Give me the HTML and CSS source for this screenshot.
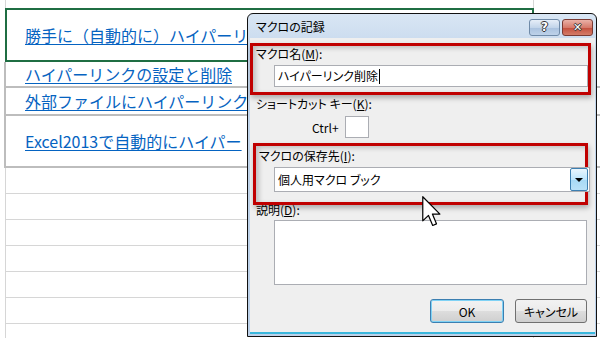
FILE: index.html
```html
<!DOCTYPE html>
<html lang="ja">
<head>
    <meta charset="UTF-8">
    <title>マクロの記録</title>
    <link rel="stylesheet" href="styles.css">
</head>
<body>
    <div class="sheet">
        <div class="row top"></div>
        <div class="row sel"><a class="link">勝手に（自動的に）ハイパーリ</a></div>
        <div class="row boxed r2"><a class="link">ハイパーリンクの設定と削除</a></div>
        <div class="row boxed r3"><a class="link">外部ファイルにハイパーリンク</a></div>
        <div class="row boxed r4"><a class="link">Excel2013で自動的にハイパー</a></div>
        <div class="row"></div>
        <div class="row"></div>
        <div class="row"></div>
        <div class="row"></div>
        <div class="row"></div>
        <div class="row"></div>
        <div class="row"></div>
    </div>

    <div class="dialog">
        <div class="titlebar">
            <span class="title">マクロの記録</span>
            <span class="tbtn help">?</span>
            <span class="tbtn close">✕</span>
        </div>
        <div class="client">
            <div class="mark mark1">
                <div class="lbl">マクロ名(<u>M</u>):</div>
                <div class="input">ハイパーリンク削除<span class="caret"></span></div>
            </div>
            <div class="lbl plain">ショートカット キー(<u>K</u>):</div>
            <div class="ctrl-row">
                <span>Ctrl+</span>
                <span class="keybox"></span>
            </div>
            <div class="mark mark2">
                <div class="lbl">マクロの保存先(<u>I</u>):</div>
                <div class="select">
                    <span>個人用マクロ ブック</span>
                    <span class="drop"></span>
                </div>
            </div>
            <div class="lbl plain desc">説明(<u>D</u>):</div>
            <div class="textarea"></div>
            <div class="buttons">
                <span class="btn ok">OK</span>
                <span class="btn">キャンセル</span>
            </div>
        </div>
    </div>

    <svg class="cursor" width="19" height="31" viewBox="0 0 12.6 20.6">
        <path d="M0.5 0.5 L0.5 16.5 L4.3 12.9 L7.1 19.6 L9.6 18.5 L6.9 12 L11.9 12 Z" fill="#fff" stroke="#000" stroke-width="0.8" stroke-linejoin="round"/>
    </svg>
</body>
</html>
```

FILE: styles.css
```css
body {
    margin: 0;
    width: 600px;
    height: 338px;
    overflow: hidden;
    background: #fff;
    font-family: "Noto Sans CJK JP", sans-serif;
    position: relative;
}
.sheet {
    margin-left: 5px;
    border-left: 1px solid #d6d6d6;
    background: linear-gradient(to right, transparent 527px, #d6d6d6 527px, #d6d6d6 528px, transparent 528px);
}
.row {
    height: 25px;
    border-bottom: 1px solid #d6d6d6;
    display: flex;
    align-items: center;
    padding-left: 18px;
    white-space: nowrap;
    overflow: hidden;
}
.row.top {
    height: 8px;
    border-bottom: none;
}
.row.sel {
    height: 50px;
    margin-left: -1px;
    width: 507px;
    border: 2px solid #1f6e43;
}
.row.boxed {
    margin-left: -2px;
    padding-left: 19px;
    border-left: 2px solid #bdbdbd;
    border-bottom: 2px solid #bdbdbd;
}
.row.r2 { height: 24px; }
.row.r3 { height: 26px; }
.row.r4 { height: 50px; }
.link {
    display: inline-block;
    max-width: 223px;
    overflow: hidden;
    color: #0563c1;
    text-decoration: underline;
    text-underline-offset: 2px;
    font-size: 16px;
    line-height: 22px;
}

.dialog {
    position: absolute;
    left: 247px;
    top: 13px;
    width: 348px;
    height: 322px;
    border: 1px solid #111;
    border-radius: 6px 6px 0 0;
    background: linear-gradient(#d9e6f4, #c4d7ec 40px, #bcd1e9);
    display: flex;
    flex-direction: column;
}
.titlebar {
    height: 24px;
    display: flex;
    align-items: center;
    padding: 0 3px 0 8px;
}
.title {
    flex: 1;
    font-size: 12px;
    color: #000;
    font-feature-settings: "palt";
}
.tbtn {
    width: 29px;
    height: 15px;
    border-radius: 3px;
    display: flex;
    align-items: center;
    justify-content: center;
    color: #fff;
    font-weight: bold;
    font-family: "DejaVu Sans", sans-serif;
    font-size: 12px;
    line-height: 1;
    text-shadow: -1px 0 #333, 1px 0 #333, 0 -1px #333, 0 1px #333;
}
.help {
    margin-right: 2px;
    margin-top: 2px;
    border: 1px solid #6f8aa8;
    background: linear-gradient(#e6eef8, #c3d5ea 50%, #a9c1de 51%, #bed2e9);
}
.close {
    margin-top: 2px;
    border: 1px solid #7a3a33;
    background: linear-gradient(#eab1a7, #d67a6b 50%, #c34d3c 51%, #d47c67);
    font-size: 11px;
}
.client {
    flex: 1;
    margin: 0 1px 2px 2px;
    background: #efefef;
    border-bottom: 2px solid #3ab7dc;
    padding-top: 5px;
    font-size: 12px;
    color: #000;
    font-feature-settings: "palt";
}
.lbl {
    height: 16px;
    line-height: 16px;
    padding-left: 3px;
}
.lbl u {
    text-underline-offset: 1px;
}
.mark {
    border: 3px solid #c00000;
    box-shadow: 1px 3px 5px rgba(0, 0, 0, 0.28), inset 3px 2px 5px rgba(0, 0, 0, 0.2);
    position: relative;
}
.mark1 {
    width: 335px;
    height: 46px;
}
.input {
    margin: 3px 0 0 21px;
    width: 309px;
    height: 20px;
    border: 1px solid #abadb3;
    background: #fff;
    line-height: 20px;
    padding-left: 3px;
    display: flex;
    align-items: center;
}
.caret {
    width: 1px;
    height: 15px;
    background: #000;
    margin-left: 1px;
}
.plain {
    padding-left: 6px;
    margin-top: 1px;
}
.ctrl-row {
    display: flex;
    align-items: center;
    height: 22px;
    margin-top: 4px;
    padding-left: 62px;
    gap: 4px;
}
.ctrl-row span:first-child {
    width: 29px;
}
.keybox {
    width: 22px;
    height: 20px;
    border: 1px solid #abadb3;
    background: #fff;
}
.mark2 {
    margin: 5px 0 0 3px;
    width: 335px;
    height: 62px;
    padding-top: 2px;
    box-sizing: border-box;
}
.select {
    margin: 3px 0 0 18px;
    width: 311px;
    height: 23px;
    border: 1px solid #abadb3;
    background: #fff;
    display: flex;
    align-items: center;
    padding-left: 3px;
}
.select span:first-child {
    flex: 1;
}
.drop {
    width: 16px;
    height: 21px;
    margin-right: 1px;
    border: 1px solid #3c7fb1;
    border-radius: 2px;
    background: linear-gradient(#eaf6fd, #bee6fd 50%, #a7d9f5 51%, #b9e1f8);
    display: flex;
    align-items: center;
    justify-content: center;
}
.drop::after {
    content: "";
    border-left: 4px solid transparent;
    border-right: 4px solid transparent;
    border-top: 4px solid #000;
}
.desc {
    margin-top: -3px;
}
.textarea {
    margin: 2px 0 0 24px;
    width: 311px;
    height: 63px;
    border: 1px solid #abadb3;
    background: #fff;
}
.buttons {
    display: flex;
    justify-content: flex-end;
    gap: 11px;
    margin-top: 14px;
    padding-right: 8px;
}
.btn {
    width: 70px;
    height: 22px;
    border: 1px solid #707070;
    border-radius: 3px;
    background: linear-gradient(#f2f2f2, #ebebeb 50%, #dddddd 51%, #cfcfcf);
    display: flex;
    align-items: center;
    justify-content: center;
}
.btn.ok {
    width: 72px;
    border-color: #3c7fb1;
    box-shadow: inset 0 0 0 1px #7fd2f5;
}
.cursor {
    position: absolute;
    left: 422px;
    top: 196px;
}
```
